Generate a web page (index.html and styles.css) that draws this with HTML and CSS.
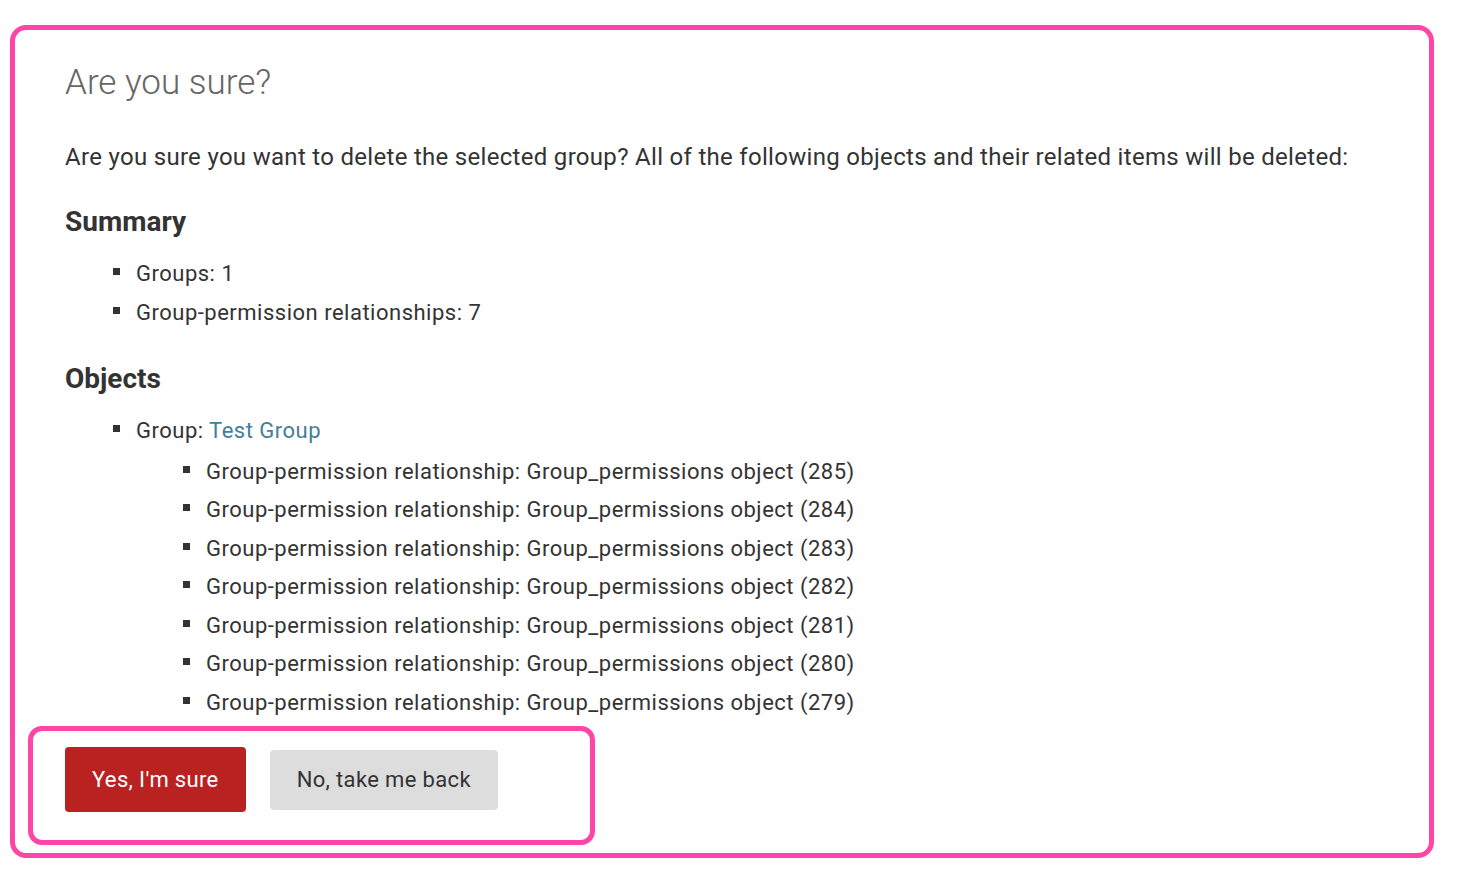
FILE: index.html
```html
<!DOCTYPE html>
<html lang="en">
<head>
<meta charset="utf-8">
<title>Are you sure?</title>
<link rel="stylesheet" href="styles.css">
</head>
<body>
<div class="page">
  <div class="content">
    <h1 class="title">Are you sure?</h1>
    <p class="lead">Are you sure you want to delete the selected group? All of the following objects and their related items will be deleted:</p>
    <h2 class="section">Summary</h2>
    <ul class="list list-summary">
      <li>Groups: 1</li>
      <li>Group-permission relationships: 7</li>
    </ul>
    <h2 class="section section-after-list">Objects</h2>
    <ul class="list list-objects">
      <li>Group: <a class="link" href="#">Test Group</a>
        <ul class="sublist">
          <li>Group-permission relationship: Group_permissions object (285)</li>
          <li>Group-permission relationship: Group_permissions object (284)</li>
          <li>Group-permission relationship: Group_permissions object (283)</li>
          <li>Group-permission relationship: Group_permissions object (282)</li>
          <li>Group-permission relationship: Group_permissions object (281)</li>
          <li>Group-permission relationship: Group_permissions object (280)</li>
          <li>Group-permission relationship: Group_permissions object (279)</li>
        </ul>
      </li>
    </ul>
  </div>
  <div class="actions">
    <button class="btn btn-danger" type="button">Yes, I'm sure</button>
    <a class="btn btn-cancel" href="#">No, take me back</a>
  </div>
</div>
</body>
</html>
```
FILE: styles.css
```css
html, body {
  margin: 0;
  background: #fff;
}
body {
  padding: 25px 0 0 10px;
  font-family: Roboto, "Liberation Sans", sans-serif;
  color: #333;
}
.page {
  width: 1424px;
  box-sizing: border-box;
  border: 5px solid #ff45a8;
  border-radius: 16px;
  padding: 31px 0 8px 13px;
}
.content {
  padding-left: 37px;
}
.title {
  margin: 0;
  font-weight: 300;
  font-size: 35px;
  line-height: 44px;
  color: #666;
}
.lead {
  margin: 36px 0 0;
  font-size: 24px;
  line-height: 32px;
  letter-spacing: 0.3px;
}
.section {
  margin: 31px 0 0;
  font-size: 28px;
  line-height: 36px;
  font-weight: 700;
  color: #333;
}
.section-after-list {
  margin-top: 29px;
}
.list {
  margin: 14px 0 0;
  padding-left: 71px;
  list-style: none;
  font-size: 22px;
  line-height: 38.5px;
  letter-spacing: 0.5px;
}
.list-summary {
  margin-top: 15px;
}
.list-objects {
  margin-top: 15px;
}
.list li::before {
  content: "";
  display: inline-block;
  width: 7px;
  height: 7px;
  background: #333;
  margin: 0 16px 6px -23px;
  vertical-align: baseline;
}
.sublist {
  margin: 2px 0 0;
  padding-left: 70px;
  list-style: none;
}
.link {
  color: #447e9b;
  text-decoration: none;
}
.actions {
  margin-top: 4px;
  width: 567px;
  box-sizing: border-box;
  border: 5px solid #ff45a8;
  border-radius: 14px;
  padding: 16px 0 28px 32px;
  display: flex;
  align-items: center;
  gap: 24px;
}
.btn {
  font-family: Roboto, "Liberation Sans", sans-serif;
  font-size: 22px;
  letter-spacing: 0.35px;
  border: none;
  border-radius: 4px;
  padding: 0 27px;
  text-decoration: none;
  display: inline-flex;
  align-items: center;
  box-sizing: border-box;
}
.btn-danger {
  height: 65px;
  background: #ba2121;
  color: #fff;
}
.btn-cancel {
  height: 60px;
  background: #ddd;
  color: #333;
}
```
